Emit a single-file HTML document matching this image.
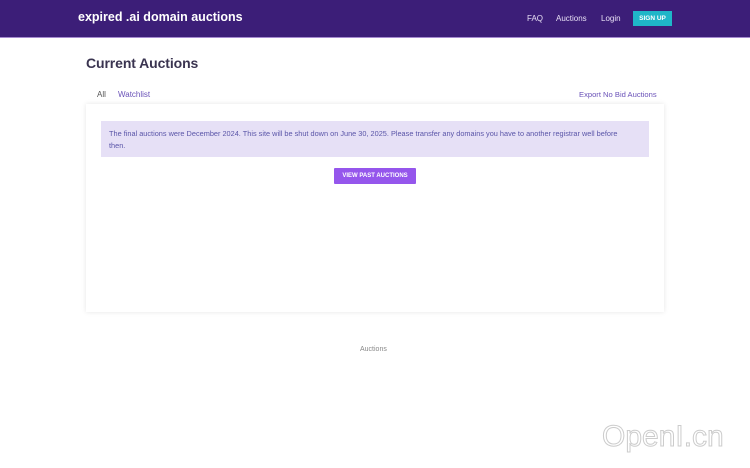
<!DOCTYPE html>
<html><head><style>
body{margin:0;width:750px;height:468px;background:#fff;font-family:"Liberation Sans",sans-serif;position:relative;overflow:hidden}
.nav{height:37px;background:#3c1e78;border-bottom:1px solid #a58ad0;position:relative}
.logo{position:absolute;left:78px;top:10px;color:#fff;font-weight:bold;font-size:12.5px}
.nl{position:absolute;top:14px;color:#e8e0f5;font-size:8px}
.su{position:absolute;left:633px;top:11px;width:39px;height:15px;background:#1fb6c8;color:#fff;font-size:6.5px;font-weight:bold;text-align:center;line-height:15px}
h1{position:absolute;left:86px;top:55px;margin:0;font-size:14px;color:#3a3450;letter-spacing:-0.1px}
.tab{position:absolute;top:90px;font-size:8px;color:#6a52b8}
.card{position:absolute;left:86px;top:104px;width:578px;height:208px;background:#fff;box-shadow:0 0 5px rgba(0,0,0,.1)}
.alert{position:absolute;left:15px;top:17px;width:526px;height:20px;padding:7px 14px 9px 8px;background:#e6e0f6;color:#5a55a8;font-size:7.35px;line-height:12px}
.btn{position:absolute;left:248px;top:64px;width:82px;height:16px;background:#9556ec;color:#fff;font-size:6px;font-weight:bold;text-align:center;line-height:16px;border-radius:1px}
.foot{position:absolute;left:360px;top:346px;font-size:7px;color:#888}
.wm{position:absolute;left:602px;top:420px;font-size:30px;color:#fff;-webkit-text-stroke:1px #ccc}
</style></head><body>
<div class="nav"><div class="logo">expired .ai domain auctions</div>
<div class="nl" style="left:527px">FAQ</div><div class="nl" style="left:556px">Auctions</div><div class="nl" style="left:601px">Login</div>
<div class="su">SIGN UP</div></div>
<h1>Current Auctions</h1>
<div class="tab" style="left:97px;color:#555">All</div><div class="tab" style="left:118px">Watchlist</div><div class="tab" style="left:579px;font-size:7.6px">Export No Bid Auctions</div>
<div class="card"><div class="alert">The final auctions were December 2024. This site will be shut down on June 30, 2025. Please transfer any domains you have to another registrar well before then.</div>
<div class="btn">VIEW PAST AUCTIONS</div></div>
<div class="foot">Auctions</div>
<div class="wm">OpenI.cn</div>
</body></html>
